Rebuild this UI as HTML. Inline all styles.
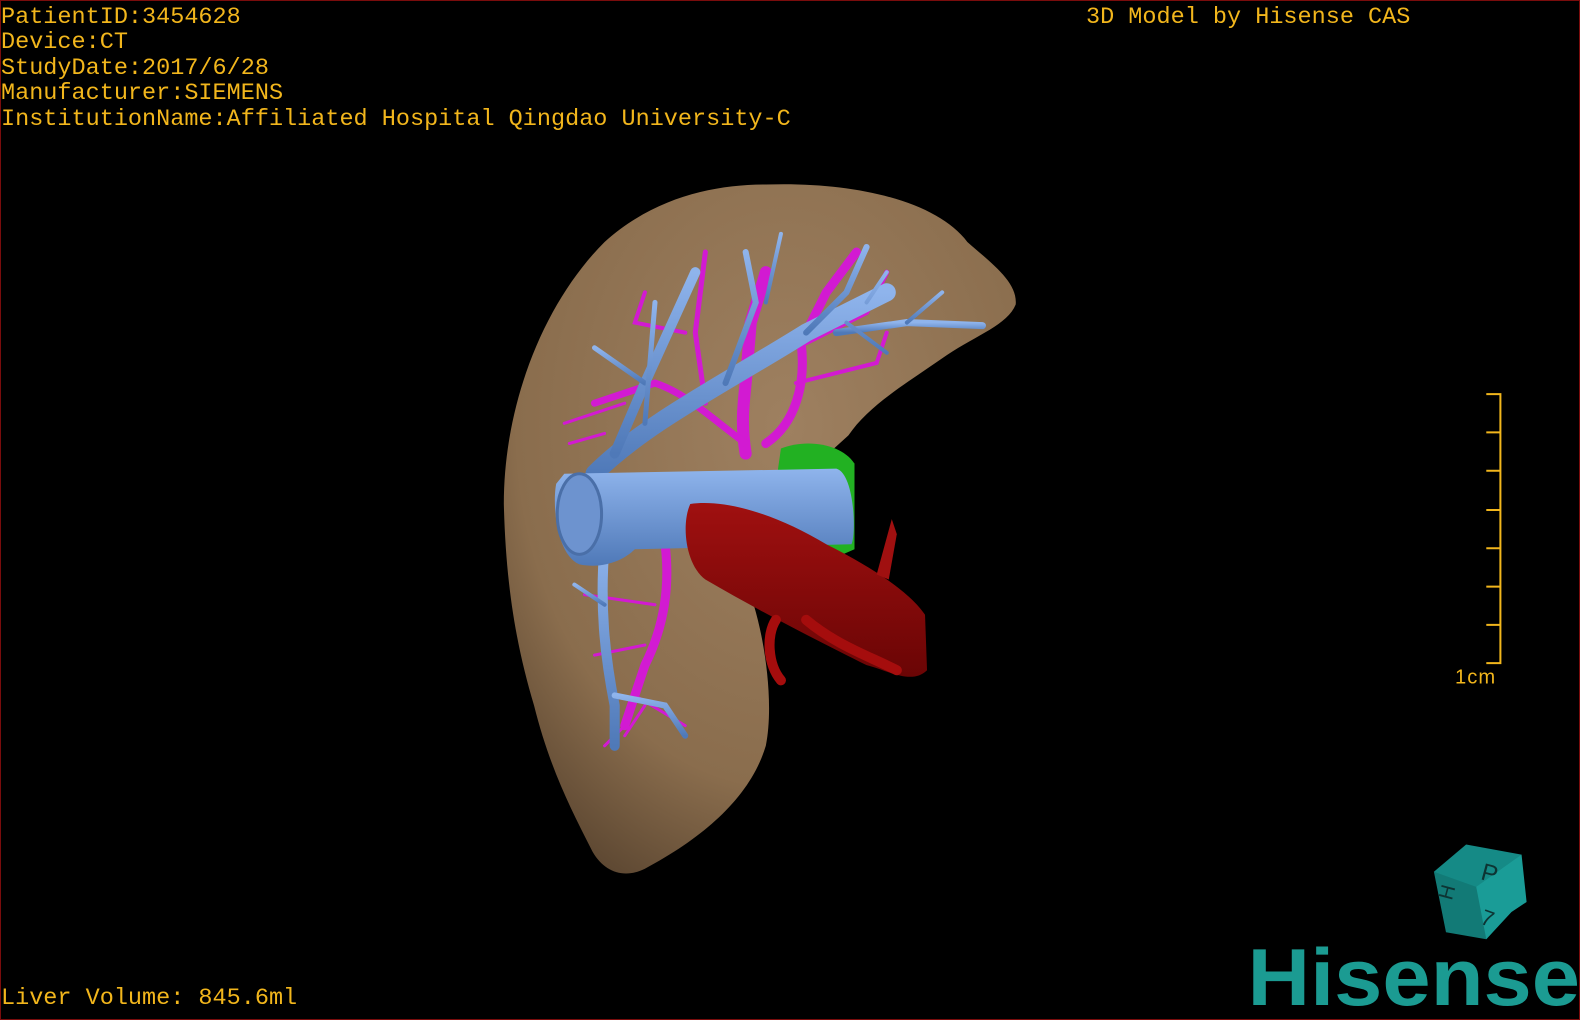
<!DOCTYPE html>
<html><head><meta charset="utf-8"><style>
html,body{margin:0;padding:0;background:#000;}
body{width:1580px;height:1020px;overflow:hidden;position:relative;}
.frame{position:absolute;left:0;top:0;width:1578px;height:1018px;border:1px solid #7a0c0c;}
.t{position:absolute;font-family:"Liberation Mono",monospace;font-size:23.5px;color:#f2b61c;white-space:pre;line-height:25.4px;}
svg{position:absolute;left:0;top:0;}
</style></head><body>
<svg width="1580" height="1020" viewBox="0 0 1568 1012">
<defs>
<radialGradient id="lg" cx="0.55" cy="0.35" r="0.75">
<stop offset="0" stop-color="#9e8060"/><stop offset="0.7" stop-color="#8a6d4d"/><stop offset="1" stop-color="#5a4530"/>
</radialGradient>
<linearGradient id="bg" x1="0" y1="0" x2="0" y2="1"><stop offset="0" stop-color="#8fb4ec"/><stop offset="1" stop-color="#4f79b8"/></linearGradient>
<linearGradient id="rg" x1="0" y1="0" x2="0" y2="1"><stop offset="0" stop-color="#a01010"/><stop offset="1" stop-color="#6a0505"/></linearGradient>
</defs>
<path d="M760 183 C850 180 930 200 960 240 C985 262 1010 280 1008 302 C1000 322 970 332 940 352 C900 380 862 402 842 432 L800 470 C770 520 745 560 748 600 C760 640 768 700 760 740 C745 790 700 830 640 862 C620 872 600 866 588 845 C565 800 545 760 530 700 C512 640 502 580 500 500 C500 400 540 300 600 240 C650 195 710 183 760 183 Z" fill="url(#lg)"/>
<g stroke="#d21ad2" fill="none" stroke-linecap="round">
<path d="M740 450 C735 420 738 400 740 380 L745 320 L760 270" stroke-width="12"/>
<path d="M760 440 C790 420 800 380 795 340 L820 290 L850 250" stroke-width="9"/>
<path d="M740 440 C700 410 680 390 650 380 L590 400" stroke-width="7"/>
<path d="M700 400 L690 330 L700 250" stroke-width="5"/>
<path d="M680 330 L630 320 L640 290" stroke-width="4"/>
<path d="M800 340 L860 310 L880 270" stroke-width="5"/>
<path d="M790 380 L870 360 L880 330" stroke-width="4"/>
<path d="M660 540 C665 580 660 620 640 660 L620 720" stroke-width="9"/>
<path d="M650 600 L580 590 M640 640 L590 650 M630 690 L680 720 M620 720 L600 740 M640 700 L620 730" stroke-width="3"/>
<path d="M560 420 L620 400 M565 440 L600 430" stroke-width="3"/>
</g>
<g stroke="url(#bg)" fill="none" stroke-linecap="round">
<path d="M590 470 C640 420 720 380 800 330 L880 290" stroke-width="18"/>
<path d="M610 450 L640 380 L690 270" stroke-width="10"/>
<path d="M640 380 L590 345" stroke-width="5"/>
<path d="M640 420 L650 300" stroke-width="5"/>
<path d="M720 380 L750 300 L740 250" stroke-width="6"/>
<path d="M760 300 L775 232" stroke-width="4"/>
<path d="M800 330 L840 290 L860 245" stroke-width="6"/>
<path d="M830 330 L900 320 L975 323" stroke-width="7"/>
<path d="M900 320 L935 290" stroke-width="4"/>
<path d="M860 300 L880 270 M840 320 L880 350" stroke-width="4"/>
<path d="M600 540 C595 600 600 650 610 700 L610 740" stroke-width="10"/>
<path d="M610 690 L660 700 L680 730" stroke-width="6"/>
<path d="M600 600 L570 580" stroke-width="4"/>
</g>
<path d="M775 445 C800 435 835 440 848 460 L848 545 L825 555 C800 548 780 520 770 480 Z" fill="#22b122"/>
<path d="M560 470 L830 465 C848 470 850 530 845 540 L630 545 C620 555 600 565 575 560 C552 550 548 500 552 480 Z" fill="url(#bg)"/>
<ellipse cx="575" cy="510" rx="22" ry="40" fill="#6d93cf" stroke="#4a6fa8" stroke-width="3"/>
<path d="M685 500 C720 495 770 510 820 540 C870 565 905 590 918 610 L920 665 C905 680 880 665 860 660 C820 640 760 610 700 575 C680 560 676 520 685 500 Z" fill="url(#rg)"/>
<path d="M870 570 L885 515 L890 530 L882 575 Z" fill="#a01010"/>
<path d="M770 615 C760 630 762 660 775 675 M800 615 C830 640 860 650 890 665" stroke="#a50d0d" stroke-width="10" fill="none" stroke-linecap="round"/>
<g stroke="#f2b61c" stroke-width="2" fill="none">
<path d="M1475 391 H1489 V658 H1475"/>
<path d="M1475 429 H1489 M1475 467 H1489 M1475 506 H1489 M1475 544 H1489 M1475 582 H1489 M1475 620 H1489"/>
</g>
<text x="1444" y="678" font-family="Liberation Sans,sans-serif" font-size="20" fill="#f2b61c" letter-spacing="1">1cm</text>
<polygon points="1423,865 1455,838 1510,848 1500,903" fill="#158a86"/>
<polygon points="1423,865 1465,880 1500,903 1475,932 1435,925" fill="#127a76"/>
<polygon points="1465,880 1510,848 1515,895 1500,905 1475,932" fill="#1a9c97"/>
<text x="1470" y="875" font-family="Liberation Sans,sans-serif" font-size="24" fill="#0d3433" transform="rotate(15 1480 868)">P</text>
<text x="1470" y="920" font-family="Liberation Sans,sans-serif" font-size="22" fill="#0d3433" transform="rotate(20 1480 912)">7</text>
<text x="1430" y="890" font-family="Liberation Sans,sans-serif" font-size="20" fill="#0d3433" transform="rotate(-75 1438 885)">H</text>
<text x="1238" y="997" font-family="Liberation Sans,sans-serif" font-weight="bold" font-size="80" fill="#1b9b92" textLength="330" lengthAdjust="spacingAndGlyphs">Hisense</text>
</svg>
<div class="frame"></div>
<div class="t" style="left:1px;top:5px;">PatientID:3454628
Device:CT
StudyDate:2017/6/28
Manufacturer:SIEMENS
InstitutionName:Affiliated Hospital Qingdao University-C</div>
<div class="t" style="left:1086px;top:5px;">3D Model by Hisense CAS</div>
<div class="t" style="left:1px;top:986px;">Liver Volume: 845.6ml</div>
</body></html>
